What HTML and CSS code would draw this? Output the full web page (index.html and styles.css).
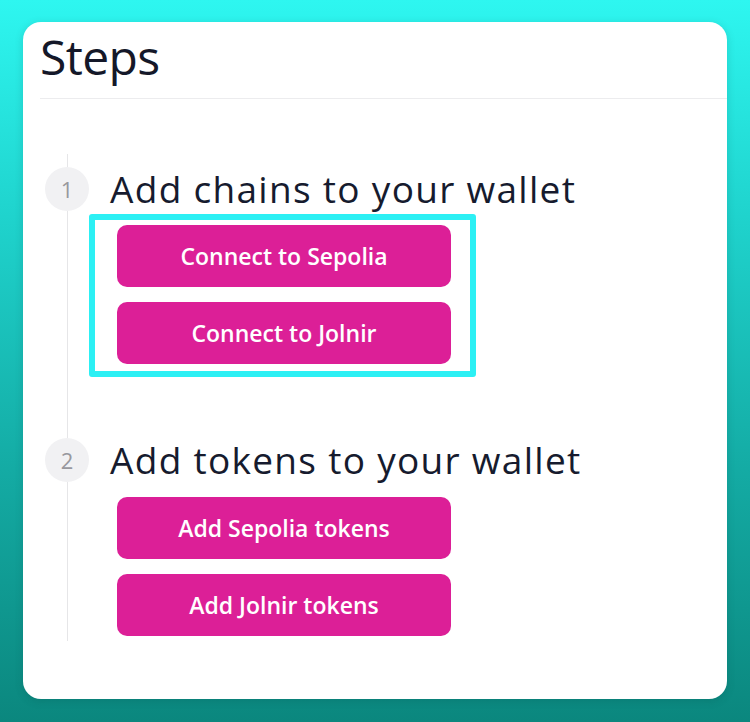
FILE: index.html
```html
<!DOCTYPE html>
<html lang="en">
<head>
    <meta charset="UTF-8">
    <meta name="viewport" content="width=device-width, initial-scale=1.0">
    <title>Steps</title>
    <link rel="stylesheet" href="styles.css">
</head>
<body>
    <div class="card">
        <div class="header">
            <h2>Steps</h2>
        </div>
        <div class="steps">
            <div class="step first">
                <div class="marker">
                    <span class="num">1</span>
                    <span class="line"></span>
                </div>
                <div class="content">
                    <h3>Add chains to your wallet</h3>
                    <div class="actions highlight">
                        <button>Connect to Sepolia</button>
                        <button>Connect to Jolnir</button>
                    </div>
                </div>
            </div>
            <div class="step last">
                <div class="marker">
                    <span class="num">2</span>
                    <span class="line"></span>
                </div>
                <div class="content">
                    <h3>Add tokens to your wallet</h3>
                    <div class="actions">
                        <button>Add Sepolia tokens</button>
                        <button>Add Jolnir tokens</button>
                    </div>
                </div>
            </div>
        </div>
    </div>
</body>
</html>
```
FILE: styles.css
```css
html {
    font-family: 'Open Sans', 'Noto Sans', sans-serif;
}
body{
    margin: 0;
    min-height: 722px;
    box-sizing: border-box;
    padding: 22px 23px 23px 23px;
    background: linear-gradient(180deg, #2ef6f0 0%, #1fd3cd 30%, #14aba4 65%, #0b877e 100%);
}
.card{
    height: 677px;
    box-sizing: border-box;
    background-color: #ffffff;
    border-radius: 18px;
    box-shadow: 0 2px 8px rgba(0, 60, 60, 0.18);
    padding-top: 7px;
    overflow: hidden;
}
.header{
    margin-left: 17px;
    border-bottom: 1px solid #ececee;
    height: 69px;
}
.header h2{
    margin: 0;
    font-size: 48px;
    font-weight: 400;
    line-height: 56px;
    color: #141829;
    letter-spacing: -0.6px;
}
.steps{
    padding: 55px 0 0 22px;
}
.step{
    display: grid;
    grid-template-columns: 44px 1fr;
    column-gap: 21px;
}
.marker{
    display: flex;
    flex-direction: column;
    align-items: center;
}
.first .marker{
    padding-top: 13px;
    background: linear-gradient(#e6e6e8, #e6e6e8) center top / 1px 13px no-repeat;
}
.num{
    width: 44px;
    height: 44px;
    border-radius: 50%;
    background-color: #f1f1f3;
    color: #98989d;
    font-size: 22px;
    display: flex;
    align-items: center;
    justify-content: center;
    flex-shrink: 0;
}
.line{
    flex: 1;
    width: 1px;
    background-color: #e6e6e8;
}
.first .content{
    padding-top: 13px;
    padding-bottom: 61px;
}
.last .content{
    padding-bottom: 5px;
}
.content h3{
    margin: 0;
    height: 44px;
    font-size: 37px;
    font-weight: 500;
    line-height: 44px;
    color: #161b2e;
    letter-spacing: 1.3px;
    white-space: nowrap;
}
.actions{
    display: flex;
    flex-direction: column;
    gap: 15px;
    width: 334px;
    margin-left: 7px;
    margin-top: 15px;
}
.highlight{
    margin-top: 3px;
    margin-left: -21px;
    border: 6px solid #2cf0f4;
    border-radius: 3px;
    padding: 5px 19px 7px 22px;
}
button{
    height: 62px;
    border: none;
    border-radius: 10px;
    background-color: #dc1f97;
    color: #ffffff;
    font-family: 'Open Sans', 'Noto Sans', sans-serif;
    font-size: 23px;
    font-weight: 600;
    letter-spacing: 0;
}
```
